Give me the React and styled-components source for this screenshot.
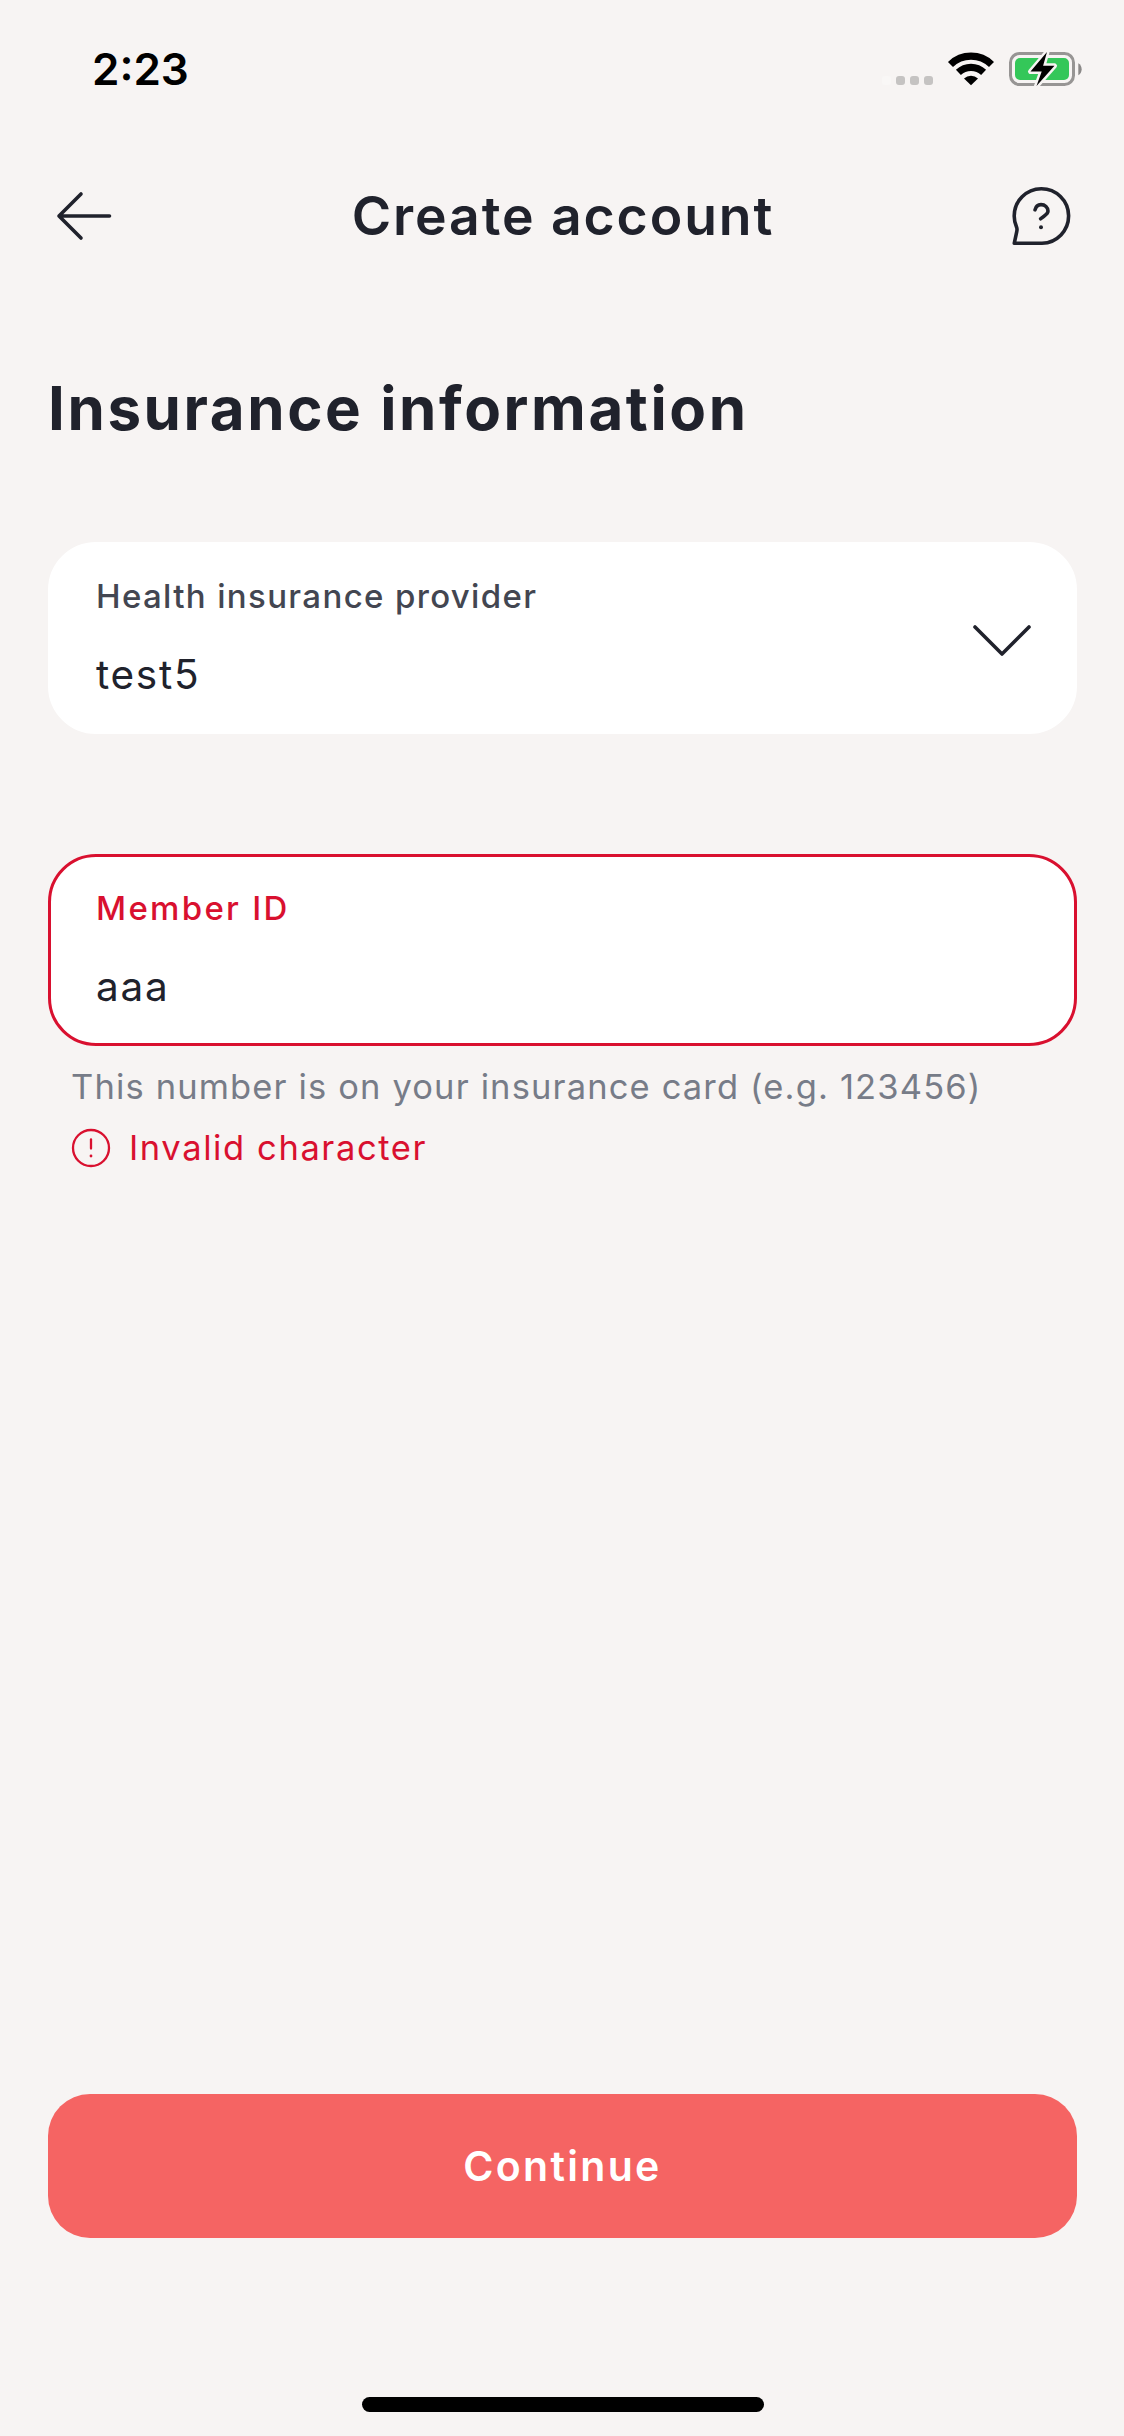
import React from "react";
import styled, { createGlobalStyle } from "styled-components";

const ink = "#20222c";
const red = "#d9102f";
const canvas = "#f7f4f3";

const GlobalStyle = createGlobalStyle`
  * { box-sizing: border-box; }
  body { margin: 0; background: ${canvas}; }
`;

const Screen = styled.main`
  display: flex;
  flex-direction: column;
  width: 1124px;
  height: 2436px;
  background: ${canvas};
  color: ${ink};
  font-family: Inter, "Liberation Sans", sans-serif;
`;

const StatusBar = styled.div`
  display: flex;
  align-items: center;
  justify-content: space-between;
  height: 138px;
  padding: 0 41px 0 92px;
`;

const Clock = styled.span`
  color: #000;
  font-size: 44px;
  font-weight: 600;
  line-height: 54px;
`;

const Header = styled.header`
  display: flex;
  align-items: center;
  justify-content: space-between;
  height: 156px;
  padding: 0 51px 0 54px;
`;

const Title = styled.h1`
  margin: 0;
  padding-left: 1px;
  font-size: 53.5px;
  font-weight: 600;
  line-height: 64px;
  letter-spacing: 1.9px;
`;

const IconButton = styled.button`
  display: flex;
  padding: 0;
  border: 0;
  background: none;
  color: inherit;
`;

const Content = styled.section`
  display: flex;
  flex: 1;
  flex-direction: column;
  padding: 79px 47px 0 48px;
`;

const Heading = styled.h2`
  margin: 0 0 99px;
  font-size: 60px;
  font-weight: 700;
  line-height: 70px;
  letter-spacing: 2.6px;
`;

const Field = styled.div`
  display: flex;
  align-items: center;
  justify-content: space-between;
  height: 192px;
  padding: 2px 42px 0 45px;
  border: 3px solid ${(p) => (p.$invalid ? red : "#fff")};
  border-radius: 48px;
  background: #fff;
  margin-bottom: ${(p) => (p.$invalid ? 19 : 120)}px;
`;

const FieldText = styled.div`
  display: flex;
  flex-direction: column;
  gap: 35px;
  align-self: flex-start;
  align-items: flex-start;
  padding-top: 29px;
`;

const Label = styled.span`
  color: ${(p) => (p.$invalid ? red : "#434651")};
  font-size: 33px;
  font-weight: 500;
  line-height: 40px;
  letter-spacing: ${(p) => (p.$invalid ? 2.3 : 1.35)}px;
`;

const Value = styled.span`
  font-size: 40.5px;
  font-weight: 400;
  line-height: 48px;
  letter-spacing: 1.7px;
`;

const Hint = styled.p`
  align-self: flex-start;
  margin: 0 0 17px 23px;
  color: #777c88;
  font-size: 34.5px;
  line-height: 44px;
  letter-spacing: 1.14px;
`;

const ErrorRow = styled.div`
  display: flex;
  align-items: center;
  gap: 18px;
  margin-left: 23px;
  color: ${red};
  font-size: 34.5px;
  line-height: 44px;
`;

const ErrorText = styled.span`
  letter-spacing: 1.6px;
`;

const ContinueButton = styled.button`
  display: flex;
  align-items: center;
  justify-content: center;
  height: 144px;
  margin-top: auto;
  padding: 0;
  border: 0;
  border-radius: 42px;
  background: #f56463;
  color: #fff;
  font-family: inherit;
  font-size: 41px;
  font-weight: 600;
  letter-spacing: 2.3px;
`;

const Footer = styled.footer`
  display: flex;
  justify-content: center;
  padding: 159px 0 24px 2px;
`;

const HomeIndicator = styled.div`
  width: 402px;
  height: 15px;
  border-radius: 8px;
  background: #000;
`;

function StatusIcons() {
  return (
    <svg width="203" height="40" viewBox="880 49 203 40" fill="none">
      <rect x="882" y="76" width="9" height="9" rx="3" fill="#f9f7f6" />
      {[896, 910, 924].map((x) => (
        <rect key={x} x={x} y="76" width="9" height="9" rx="3" fill="#c5c3c2" />
      ))}
      <g stroke="#000" strokeWidth="7.2">
        <path d="M950.5 64.5a29.5 29.5 0 0 1 41 0" />
        <path d="M958.4 72.4a18.3 18.3 0 0 1 25.2 0" />
      </g>
      <path d="M964 78.4a10.4 10.4 0 0 1 14 0L971 85.2z" fill="#000" />
      <rect x="1010.5" y="53.5" width="63" height="31" rx="9" stroke="#979594" strokeWidth="3" />
      <path d="M1078.3 63.2a7 7 0 0 1 0 12z" fill="#8b8988" />
      <rect x="1015" y="58" width="54" height="22" rx="5" fill="#34c759" />
      <path
        d="M1047 52 1030.5 71.5h11.2L1036.5 86 1054.5 65.8h-11.4z"
        fill="#000"
        stroke={canvas}
        strokeWidth="5"
        strokeLinejoin="round"
        paintOrder="stroke"
      />
    </svg>
  );
}

const BackIcon = () => (
  <svg width="60" height="60" viewBox="54 186 60 60" fill="none" stroke="currentColor" strokeWidth="3.6" strokeLinecap="round" strokeLinejoin="round">
    <path d="M109.5 216H59M81 194 59 216l22 22" />
  </svg>
);

const HelpIcon = () => (
  <svg width="62" height="62" viewBox="1011 185 62 62" fill="none" stroke="currentColor" strokeWidth="3.6" strokeLinecap="round" strokeLinejoin="round">
    <path d="M1014.3 243.2H1042a27.2 27.2 0 1 0-27.8-27.2c0 5.5 1.2 8.5 2.4 11.2.6 1.5.5 3 .1 4.6z" />
    <path d="M1035 209.8c.8-3.4 3-5.200 6-5.200 4 0 7 2.800 7 6.400 0 3.500-4.500 5-7.400 7.800" />
    <circle cx="1041" cy="227.2" r="2" fill="currentColor" stroke="none" />
  </svg>
);

const ChevronIcon = () => (
  <svg width="60" height="36" viewBox="972 621 60 36" fill="none" stroke="currentColor" strokeWidth="3.6" strokeLinecap="round" strokeLinejoin="round">
    <path d="M975 627 1002 654 1029 627" />
  </svg>
);

const AlertIcon = () => (
  <svg width="40" height="40" viewBox="0 0 40 40" fill="none" stroke="currentColor" strokeLinecap="round">
    <circle cx="20" cy="20" r="18" strokeWidth="2.3" />
    <path d="M20 11.5V20.5" strokeWidth="2.3" />
    <circle cx="20" cy="28" r="1.4" fill="currentColor" stroke="none" />
  </svg>
);

export default function App() {
  return (
    <>
      <GlobalStyle />
      <Screen>
        <StatusBar>
          <Clock>2:23</Clock>
          <StatusIcons />
        </StatusBar>
        <Header>
          <IconButton aria-label="Back"><BackIcon /></IconButton>
          <Title>Create account</Title>
          <IconButton aria-label="Help"><HelpIcon /></IconButton>
        </Header>
        <Content>
          <Heading>Insurance information</Heading>
          <Field>
            <FieldText>
              <Label>Health insurance provider</Label>
              <Value>test5</Value>
            </FieldText>
            <ChevronIcon />
          </Field>
          <Field $invalid>
            <FieldText>
              <Label $invalid>Member ID</Label>
              <Value>aaa</Value>
            </FieldText>
          </Field>
          <Hint>This number is on your insurance card (e.g. 123456)</Hint>
          <ErrorRow>
            <AlertIcon />
            <ErrorText>Invalid character</ErrorText>
          </ErrorRow>
          <ContinueButton>Continue</ContinueButton>
        </Content>
        <Footer>
          <HomeIndicator />
        </Footer>
      </Screen>
    </>
  );
}
